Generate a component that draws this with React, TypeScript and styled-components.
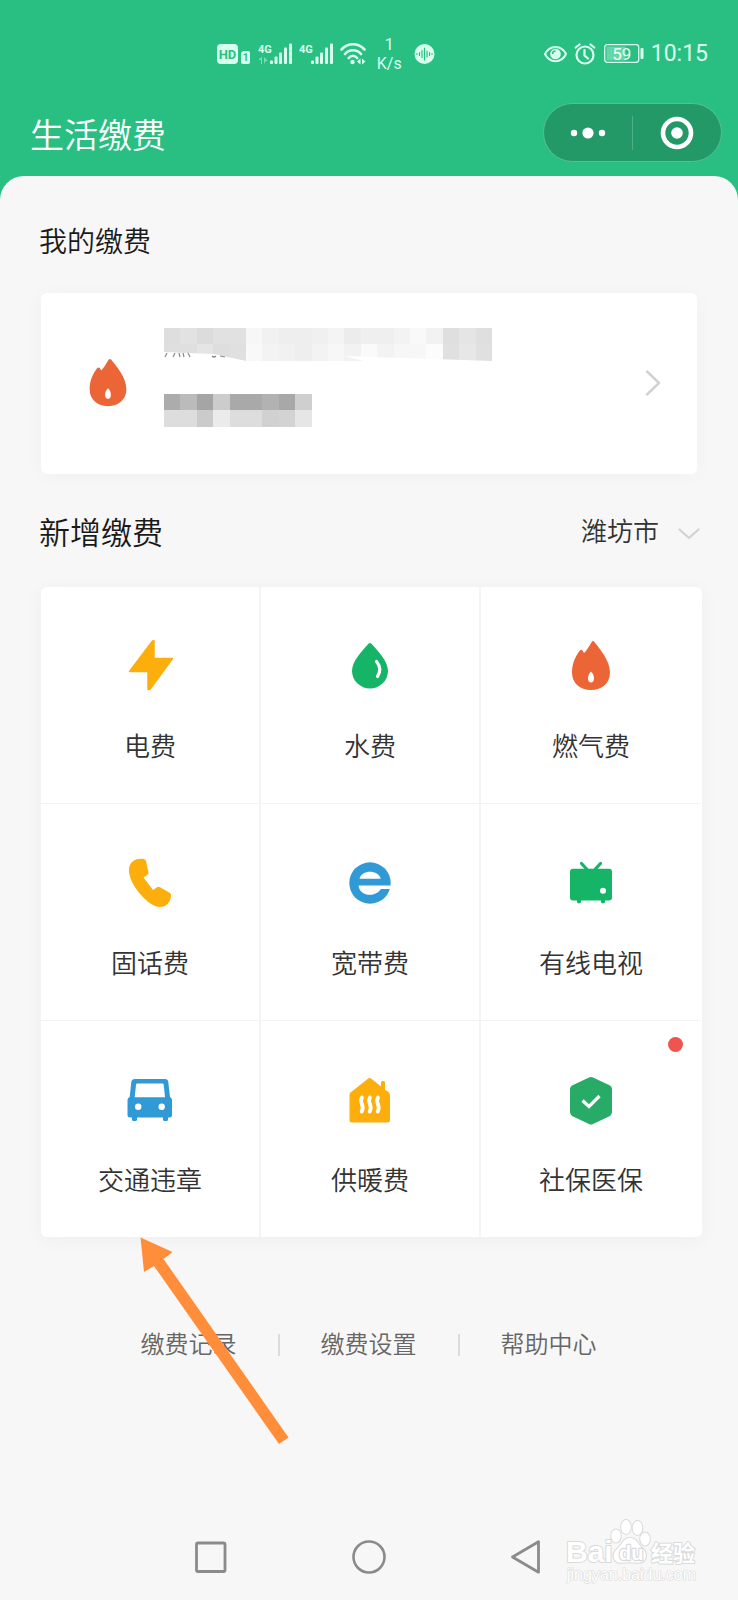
import React from "react";
import styled, { createGlobalStyle } from "styled-components";

const GREEN = "#29bf83";
const PAGE = "#f7f7f7";
const STATUS = "#d9ffef";

const GlobalStyle = createGlobalStyle`
  * { box-sizing: border-box; }
  body {
    margin: 0;
    background: ${PAGE};
    font-family: Roboto, "Noto Sans CJK SC", sans-serif;
    font-weight: 350;
    color: #1a1a1a;
  }
  button, select { font: inherit; color: inherit; border: 0; background: none; padding: 0; margin: 0; }
  a { color: inherit; text-decoration: none; }
  h1, h2, p { margin: 0; font-weight: inherit; }
  svg { display: block; flex: none; }
`;

const Page = styled.div`
  min-height: 100vh;
  display: flex;
  flex-direction: column;
  background: ${PAGE};
`;

const Header = styled.header`
  background: ${GREEN};
  padding: 28px 16px 38px 30px;
`;

const StatusBar = styled.div`
  display: flex;
  justify-content: flex-end;
  align-items: center;
  gap: 109px;
  height: 51px;
  padding-right: 14px;
  color: ${STATUS};
`;

const StatusGroup = styled.div<{ $gap: number }>`
  display: flex;
  align-items: center;
  gap: ${(p) => p.$gap}px;
`;

const Activity = styled.div`
  display: flex;
  align-items: center;
  gap: 12px;
  padding-left: 4px;
`;

const Speed = styled.p`
  font-size: 16px;
  line-height: 19px;
  text-align: center;
  font-weight: 400;
`;

const Clock = styled.time`
  font-size: 23px;
  line-height: 32px;
  font-weight: 400;
`;

const TitleBar = styled.div`
  display: flex;
  align-items: center;
  justify-content: space-between;
  margin-top: 24px;
`;

const AppTitle = styled.h1`
  padding-top: 6px;
  font-size: 34px;
  line-height: 48px;
  color: #fff;
`;

const Capsule = styled.div`
  display: flex;
  align-items: center;
  width: 179px;
  height: 59px;
  border: 1px solid #5bbd95;
  border-radius: 30px;
  background: #239968;
`;

const CapsuleButton = styled.button`
  flex: 1;
  height: 34px;
  display: flex;
  align-items: center;
  justify-content: center;
  & + & { border-left: 1px solid #4fae88; }
`;

const Sheet = styled.main`
  flex: 1;
  display: flex;
  flex-direction: column;
  margin-top: -24px;
  padding: 47px 36px 0 39px;
  border-radius: 24px 24px 0 0;
  background: ${PAGE};
`;

const SectionTitle = styled.h2<{ $large?: boolean }>`
  font-size: ${(p) => (p.$large ? 31 : 28)}px;
  line-height: ${(p) => (p.$large ? 44 : 40)}px;
`;

const Account = styled.a`
  display: flex;
  align-items: center;
  height: 181px;
  margin: 30px 5px 38px 2px;
  padding: 0 36px 2px 38px;
  border-radius: 6px;
  background: #fff;
  box-shadow: 0 2px 20px rgba(0, 0, 0, 0.03);
`;

const AccountInfo = styled.div`
  flex: 1;
  margin-left: 27px;
`;

const SectionHead = styled.div`
  display: flex;
  align-items: center;
  justify-content: space-between;
  padding-right: 2px;
`;

const CityPicker = styled.label`
  display: flex;
  align-items: center;
  gap: 18px;
  color: #333;
`;

const CitySelect = styled.select`
  appearance: none;
  font-size: 26px;
  line-height: 38px;
  padding-bottom: 4px;
  outline: 0;
`;

const ServiceArea = styled.section`
  position: relative;
  margin: 31px 0 0 2px;
`;

const Services = styled.div`
  display: grid;
  grid-template-columns: repeat(3, 1fr);
  padding-right: 1px;
  border-radius: 6px;
  overflow: hidden;
  background: #fff;
  box-shadow: 0 2px 20px rgba(0, 0, 0, 0.04);
`;

const Tile = styled.a`
  position: relative;
  display: flex;
  flex-direction: column;
  align-items: center;
  gap: 32px;
  height: 217px;
  padding-top: 49px;
  border-right: 2px solid #f3f4f5;
  border-bottom: 1px solid #f1f3f4;
  color: #333;
  font-size: 26px;
  line-height: 38px;
  &:nth-child(3n) { border-right: 0; }
  &:nth-child(n + 7) { height: 216px; border-bottom: 0; }
`;

const Badge = styled.span`
  position: absolute;
  top: 16px;
  right: 18px;
  width: 15px;
  height: 15px;
  border-radius: 50%;
  background: #f0544f;
`;

const Pointer = styled.svg`
  position: absolute;
  top: 100%;
  left: 99px;
  pointer-events: none;
`;

const Links = styled.nav`
  display: flex;
  justify-content: center;
  align-items: center;
  gap: 41px;
  margin: 90px 0 0;
  padding-right: 4px;
  font-size: 24px;
  line-height: 36px;
  color: #666;
`;

const Divider = styled.span`
  width: 2px;
  height: 22px;
  background: #dcdcdc;
`;

const SystemBar = styled.footer`
  position: relative;
  display: flex;
  justify-content: center;
  align-items: center;
  gap: 124px;
  height: 86px;
`;

const SystemButton = styled.button`
  width: 34px;
  height: 34px;
`;

const Watermark = styled.svg`
  position: absolute;
  right: 36px;
  top: 4px;
`;

const Signal = ({ active }: { active?: boolean }) => (
  <svg width="34" height="22" viewBox="0 0 34 22" fill={STATUS}>
    <text x="0" y="10" fontFamily="Roboto" fontWeight="700" fontSize="11">4G</text>
    {active && <path d="M1 16l3-2v7H3v-4H1zM6 14l4 4H8l-2 3z" opacity=".45" />}
    <rect x="12" y="17.500" width="3" height="3.500" rx="1" />
    <rect x="16.500" y="13.500" width="3" height="7.500" rx="1" />
    <rect x="21" y="9.500" width="3" height="11.500" rx="1" />
    <rect x="26" y="4.500" width="3" height="16.500" rx="1" />
    <rect x="31" y="0.500" width="3" height="20.500" rx="1" />
  </svg>
);

const NetworkStatus = () => (
  <StatusGroup $gap={7}>
    <svg width="34" height="22" viewBox="0 0 34 22">
      <rect x="0" y="1" width="21" height="20" rx="4" fill={STATUS} />
      <text x="10.500" y="16" textAnchor="middle" fontFamily="Roboto" fontWeight="700" fontSize="13" fill={GREEN}>HD</text>
      <path d="M26 8h5a2 2 0 0 1 2 2v9a2 2 0 0 1-2 2h-5a2 2 0 0 1-2-2v-9z" fill={STATUS} />
      <text x="28.500" y="18" textAnchor="middle" fontFamily="Roboto" fontWeight="700" fontSize="10" fill={GREEN}>1</text>
    </svg>
    <Signal active />
    <Signal />
    <svg width="26" height="22" viewBox="0 0 26 22" fill="none" stroke={STATUS} strokeWidth="2.600" strokeLinecap="round">
      <path d="M1.500 6.500C8-.5 18-.5 24.500 6.500M5 11c4.500-5 11.500-5 16 0M8.700 15c2.500-3 6-3 8.500 0" />
      <circle cx="12.500" cy="19" r="2.200" fill={STATUS} stroke="none" />
      <path d="M17 18.500l3.500-3v6zM25.500 18.500l-3.500-3v6z" fill={STATUS} stroke="none" />
    </svg>
    <Activity>
      <Speed>
        1<br />
        K/s
      </Speed>
      <svg width="21" height="22" viewBox="0 0 21 22">
        <circle cx="10.500" cy="11" r="10" fill={STATUS} />
        <path d="M3 10.500v1M5.500 9.500v3M8 7.500v7M10.500 5v12M13 8v6M15.500 9.500v3M18 10.500v1" stroke={GREEN} strokeWidth="1.200" strokeLinecap="round" />
      </svg>
    </Activity>
  </StatusGroup>
);

const DeviceStatus = () => (
  <StatusGroup $gap={7}>
    <svg width="23" height="18" viewBox="0 0 23 18">
      <path d="M1 9C5.500-.5 17.500-.5 22 9C17.500 18.500 5.500 18.500 1 9z" fill="none" stroke={STATUS} strokeWidth="2" />
      <circle cx="11.500" cy="9" r="5.300" fill={STATUS} />
      <path d="M8.500 9a3 3 0 0 1 3-3" stroke={GREEN} strokeWidth="1.500" fill="none" />
    </svg>
    <svg width="22" height="22" viewBox="0 0 22 22" fill="none" stroke={STATUS} strokeWidth="2.200" strokeLinecap="round">
      <circle cx="11" cy="12" r="8.500" />
      <path d="M10.500 7v5.500l3.500 3M1.700 4.500L5.500 1.500M20.300 4.500L16.500 1.500" />
    </svg>
    <svg width="41" height="22" viewBox="0 0 41 22">
      <rect x="1.700" y="1.700" width="34" height="17.600" rx="2.500" fill="none" stroke={STATUS} strokeWidth="1.300" />
      <rect x="3.500" y="3.500" width="19" height="14" fill={STATUS} opacity=".35" />
      <rect x="37.500" y="5" width="3" height="11" rx="1" fill={STATUS} />
      <text x="18.700" y="16.500" textAnchor="middle" fontFamily="Roboto" fontWeight="400" fontSize="17" fill="#f0fff9">59</text>
    </svg>
    <Clock>10:15</Clock>
  </StatusGroup>
);

const ICONS: Record<string, React.ReactNode> = {
  bolt: (
    <path d="M32.500 5L9.500 35.500H28V53.500L30 53.200L52.500 22.500H34V4.800z" fill="#fcae0c" stroke="#fcae0c" strokeWidth="1.500" strokeLinejoin="round" />
  ),
  drop: (
    <>
      <path d="M28.500 7.800Q30 6 31.500 7.800C37 14 48 25 48 35A18 17.500 0 0 1 12 35C12 25 23 14 28.500 7.800z" fill="#15b466" />
      <path d="M36.500 25.500Q42.500 33 37.500 40.500" fill="none" stroke="#fff" strokeWidth="3.200" strokeLinecap="round" />
    </>
  ),
  flame: (
    <>
      <path d="M30.800 5.800Q32 4.300 33.200 5.800C38 12 49 24 49 36.500C49 47 41 54 30 54S11 47 11 36.500C11 28 14 21 18.500 15Q20 13 21.500 14.500L23 17C26 14.500 28.500 9.500 30.800 5.800z" fill="#eb6536" />
      <path d="M30 35.500C34 39 34 46.500 30 46.500S26 39 30 35.500z" fill="#fff" />
    </>
  ),
  phone: (
    <path d="M9 17.500C9 8.500 15 5.500 23 5.800Q25.500 6 26 8L28.500 19.500Q28.700 21 27.500 21.700L23.500 24.500L33 37L37 34.200Q38.500 33.200 40 34.200L50 40Q51.300 41 51 43C50.500 49.500 46 54 40 54C28 54 9 31 9 17.500z" fill="#fcae0c" />
  ),
  broadband: (
    <>
      <circle cx="30" cy="30" r="20.700" fill="#2f9ad6" />
      <path d="M19.500 25.700C21.500 16.500 38.500 16.500 40.700 25.700z" fill="#fff" />
      <path d="M18.500 32.500H51V36H41C36 44 20 44.500 18.500 32.500z" fill="#fff" />
    </>
  ),
  tv: (
    <>
      <path d="M20.500 10.500L26.500 17M39.500 10.500L33.500 17" stroke="#15b466" strokeWidth="3.200" strokeLinecap="round" />
      <rect x="9" y="15.700" width="42" height="31.800" rx="3" fill="#15b466" />
      <path d="M18 46v2.500M42 46v2.500" stroke="#15b466" strokeWidth="4" strokeLinecap="round" />
      <circle cx="42" cy="37.700" r="3" fill="#fff" />
    </>
  ),
  car: (
    <>
      <path d="M15 9H45Q48 9 48.300 12L50 27Q52 28 52 30V45Q52 47.500 49.500 47.500H48V49.500Q48 51 46.500 51H44.500Q43 51 43 49.500V47.500H17V49.500Q17 51 15.500 51H13.500Q12 51 12 49.500V47.500H10.500Q7.500 47.500 7.500 45V30Q7.500 28 9.700 27L11.300 12Q11.700 9 15 9z" fill="#2f9ad6" />
      <path d="M17.500 13.500H42.300Q43.500 13.500 43.700 14.700L45 27.200H14.700L16 14.700Q16.200 13.500 17.500 13.500z" fill="#fff" />
      <circle cx="18.200" cy="36.700" r="3.200" fill="#fff" />
      <circle cx="41.700" cy="36.700" r="3.200" fill="#fff" />
    </>
  ),
  house: (
    <>
      <path d="M28 8.700Q29.700 7.500 31.400 8.700L41 16.500V12.500Q41 11 42.500 11H43.500Q45 11 45 12.500V19.500L49 22.500Q50 23.500 50 25V50Q50 52.500 47.500 52.500H12Q9.500 52.500 9.500 50V25Q9.500 23.500 10.500 22.500z" fill="#fcae0c" />
      <path d="M22 27.500C18.500 33 25.500 35 21.700 41.500M30 27.500C26.500 33 33.500 35 29.700 41.500M38 27.500C34.500 33 41.500 35 37.700 41.500" fill="none" stroke="#fff" strokeWidth="3.800" strokeLinecap="round" />
    </>
  ),
  shield: (
    <>
      <path d="M28 7.500Q30 6.300 32 7.500L49 15.500Q51 16.500 51 19V42Q51 44.500 49 46L32 54Q30 55 28 54L11 46Q9 44.500 9 42V19Q9 16.500 11 15.500z" fill="#27ab66" />
      <path d="M21.500 30.500L28 36.500L38.500 26" fill="none" stroke="#fff" strokeWidth="3.200" />
    </>
  ),
};

const ServiceIcon = ({ name, size = 60 }: { name: string; size?: number }) => (
  <svg width={size} height={size} viewBox="0 0 60 60" aria-hidden="true">
    {ICONS[name]}
  </svg>
);

const SERVICES = [
  { icon: "bolt", label: "电费" },
  { icon: "drop", label: "水费" },
  { icon: "flame", label: "燃气费" },
  { icon: "phone", label: "固话费" },
  { icon: "broadband", label: "宽带费" },
  { icon: "tv", label: "有线电视" },
  { icon: "car", label: "交通违章" },
  { icon: "house", label: "供暖费" },
  { icon: "shield", label: "社保医保", badge: true },
];

// Grey levels of the pixelated account name and number, row by row.
const NAME_ROWS = [
  [222, 226, 220, 225, 225, 247, 241, 238, 238, 240, 244, 236, 239, 239, 243, 249, 242, 223, 229, 223],
  [223, 223, 229, 222, 224, 249, 243, 241, 238, 243, 247, 242, 250, 243, 247, 247, 252, 224, 231, 224],
];
const NUMBER_ROWS = [
  [172, 187, 165, 204, 169, 169, 178, 168, 207],
  [221, 221, 203, 235, 221, 221, 209, 211, 230],
];
const BLOCK = 16.4;

const blocks = (rows: number[][], top: number) =>
  rows.flatMap((row, r) =>
    row.map((v, c) => (
      <rect key={`${top}-${r}-${c}`} x={c * BLOCK} y={top + r * BLOCK} width={BLOCK} height={BLOCK} fill={`rgb(${v},${v},${v})`} shapeRendering="crispEdges" />
    ))
  );

const MaskedAccount = () => (
  <svg width="328" height="109" viewBox="0 0 328 109" aria-hidden="true">
    {blocks(NAME_ROWS, 0)}
    <path d="M0 24L50 26L82 33H0zM180 28L328 33H200z" fill="#fff" />
    <path d="M3 25l-2 4M11 25l-2 4M15 25l1 4M19 25l1 4M24 25l2 4M48 28q2 2 4 0M56 28l5 1" fill="none" stroke="#8a8a8a" strokeWidth="1.200" />
    {blocks(NUMBER_ROWS, 66)}
  </svg>
);

export default function App() {
  return (
    <Page>
      <GlobalStyle />
      <Header>
        <StatusBar>
          <NetworkStatus />
          <DeviceStatus />
        </StatusBar>
        <TitleBar>
          <AppTitle>生活缴费</AppTitle>
          <Capsule>
            <CapsuleButton aria-label="更多">
              <svg width="36" height="12" viewBox="0 0 36 12" fill="#fff">
                <circle cx="4" cy="6" r="3.200" />
                <circle cx="18" cy="6" r="5.600" />
                <circle cx="32" cy="6" r="3.200" />
              </svg>
            </CapsuleButton>
            <CapsuleButton aria-label="关闭">
              <svg width="34" height="34" viewBox="0 0 34 34">
                <circle cx="17" cy="17" r="14" fill="none" stroke="#fff" strokeWidth="4.600" />
                <circle cx="17" cy="17" r="5.800" fill="#fff" />
              </svg>
            </CapsuleButton>
          </Capsule>
        </TitleBar>
      </Header>

      <Sheet>
        <SectionTitle>我的缴费</SectionTitle>
        <Account href="#account" aria-label="燃气费">
          <ServiceIcon name="flame" size={58} />
          <AccountInfo>
            <MaskedAccount />
          </AccountInfo>
          <svg width="16" height="28" viewBox="0 0 16 28" fill="none" stroke="#d2d2d2" strokeWidth="2.500" strokeLinecap="round" strokeLinejoin="round">
            <path d="M2 2.500L14 14L2 25.500" />
          </svg>
        </Account>

        <SectionHead>
          <SectionTitle $large>新增缴费</SectionTitle>
          <CityPicker>
            <CitySelect aria-label="城市" defaultValue="潍坊市">
              <option>潍坊市</option>
            </CitySelect>
            <svg width="22" height="12" viewBox="0 0 22 12" fill="none" stroke="#d2d2d2" strokeWidth="2.200" strokeLinecap="round" strokeLinejoin="round">
              <path d="M1.500 1.500L11 10L20.500 1.500" />
            </svg>
          </CityPicker>
        </SectionHead>

        <ServiceArea>
          <Services>
            {SERVICES.map((s) => (
              <Tile key={s.label} href={`#${s.icon}`}>
                <ServiceIcon name={s.icon} />
                {s.label}
                {s.badge && <Badge />}
              </Tile>
            ))}
          </Services>
          <Pointer width="150" height="208" viewBox="0 0 150 208" aria-hidden="true">
            <path d="M0.500 0.500L32.500 15L23.500 22L148.500 200.500L139 207L14 29L4 35z" fill="#ff8d3a" />
          </Pointer>
        </ServiceArea>

        <Links>
          <a href="#records">缴费记录</a>
          <Divider />
          <a href="#settings">缴费设置</a>
          <Divider />
          <a href="#help">帮助中心</a>
        </Links>
      </Sheet>

      <SystemBar>
        <SystemButton aria-label="最近任务">
          <svg width="34" height="34" viewBox="0 0 34 34" fill="none" stroke="#8b8b8b" strokeWidth="2.800">
            <rect x="2.500" y="3" width="28.500" height="28.500" rx="1.500" />
          </svg>
        </SystemButton>
        <SystemButton aria-label="主屏幕">
          <svg width="34" height="34" viewBox="0 0 34 34" fill="none" stroke="#8b8b8b" strokeWidth="2.600">
            <circle cx="17" cy="17" r="15.500" />
          </svg>
        </SystemButton>
        <SystemButton aria-label="返回">
          <svg width="34" height="34" viewBox="0 0 34 34" fill="none" stroke="#8b8b8b" strokeWidth="2.800" strokeLinejoin="round">
            <path d="M2.500 17L28.500 1.800V32.200z" />
          </svg>
        </SystemButton>
        <Watermark width="136" height="72" viewBox="0 0 136 72">
          <g fill="#fff" stroke="#dadada" strokeWidth="2" paintOrder="stroke" strokeLinejoin="round">
            <text x="0" y="44" fontFamily="Liberation Sans" fontWeight="700" fontSize="30">Bai</text>
            <ellipse cx="50" cy="18" rx="4.800" ry="6.500" />
            <ellipse cx="60" cy="9" rx="4.800" ry="7" />
            <ellipse cx="71.500" cy="10" rx="4.800" ry="7" />
            <ellipse cx="79" cy="21" rx="4.800" ry="6.500" />
            <path d="M64 20C71 20 72 27 77 31C83 37 79 45.500 72 44.800C66 44 62 44 56 44.800C47 45.500 45 36 51 31C56 27 57 20 64 20z" />
            <text x="53" y="42" fontFamily="Liberation Sans" fontWeight="700" fontSize="20" strokeWidth="2.400">du</text>
            <text x="85" y="43" fontFamily="Noto Sans CJK SC" fontWeight="700" fontSize="22">经验</text>
            <text x="1" y="62" fontFamily="Liberation Sans" fontSize="16" strokeWidth="1.200">jingyan.baidu.com</text>
          </g>
        </Watermark>
      </SystemBar>
    </Page>
  );
}
